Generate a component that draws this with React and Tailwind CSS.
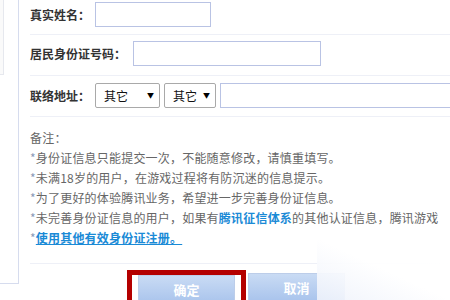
import React from "react";

// Identity info form (real name + ID number + address), with notes and buttons
const font = { fontFamily: '"Noto Sans CJK SC", "Noto Sans", sans-serif' };

function FakeSelect({ width, label }) {
  return (
    <div
      className={`${width} h-[25px] bg-white border border-[#a9a9a9] rounded-[2px] flex items-center justify-between pl-[8px] pr-[5px] text-[12px] text-[#111]`}
    >
      <span>{label}</span>
      <span className="text-[7px] text-black">▼</span>
    </div>
  );
}

export default function App() {
  return (
    <div className="relative w-[450px] h-[300px] bg-white overflow-hidden flex items-start" style={font}>
      {/* left side panel edge */}
      <div className="w-[19px] h-[284px] shrink-0 border-r border-b border-[#d6dcee] relative">
        <div className="w-[4px] h-[75px] border-r border-b border-[#e6e8ee] bg-[#fafafa]" />
      </div>

      {/* main form */}
      <div className="flex-1 ml-[11px] flex flex-col">
        {/* real name */}
        <div className="shrink-0 h-[35px] pt-[2px] border-b border-[#eef0f7] flex items-start gap-[3px]">
          <span className="h-[25px] flex items-center text-[12px] font-bold text-[#333] w-[62px]">真实姓名：</span>
          <div className="w-[116px] h-[25px] border border-[#b9c3e4] bg-white" />
        </div>

        {/* ID number */}
        <div className="shrink-0 h-[41px] pt-[6px] border-b border-[#eef0f7] flex items-start gap-[3px]">
          <span className="h-[25px] flex items-center text-[12px] font-bold text-[#333] w-[100px]">居民身份证号码：</span>
          <div className="w-[188px] h-[25px] border border-[#b9c3e4] bg-white" />
        </div>

        {/* address */}
        <div className="shrink-0 h-[41px] pt-[7px] border-b border-[#eef0f7] flex items-start">
          <span className="h-[25px] flex items-center text-[12px] font-bold text-[#333] w-[65px]">联络地址：</span>
          <FakeSelect width="w-[65px]" label="其它" />
          <div className="w-[4px]" />
          <FakeSelect width="w-[52px]" label="其它" />
          <div className="w-[4px]" />
          <div className="flex-1 h-[25px] border border-[#b9c3e4] border-r-0 bg-white" />
        </div>

        {/* notes */}
        <div className="shrink-0 pt-[11px] pb-[15px] border-b border-[#eef0f7] text-[12px] leading-[20px] tracking-[0.2px] text-[#666] whitespace-nowrap">
          <p>备注：</p>
          <p><span className="text-[#8a9ab8]">*</span>身份证信息只能提交一次，不能随意修改，请慎重填写。</p>
          <p><span className="text-[#8a9ab8]">*</span>未满18岁的用户，在游戏过程将有防沉迷的信息提示。</p>
          <p><span className="text-[#8a9ab8]">*</span>为了更好的体验腾讯业务，希望进一步完善身份证信息。</p>
          <p>
            <span className="text-[#8a9ab8]">*</span>未完善身份证信息的用户，如果有
            <span className="font-bold text-[#1a8ad6]">腾讯征信体系</span>
            的其他认证信息，腾讯游戏
          </p>
          <p>
            <span className="text-[#8a9ab8]">*</span>
            <span className="font-bold text-[#1a8ad6] underline">使用其他有效身份证注册。</span>
          </p>
        </div>

        {/* buttons */}
        <div className="shrink-0 pt-[6px] pl-[97px] flex items-start">
          <div className="border-[5px] border-b-0 border-[#b40000] px-[6px] h-[40px]">
            <div className="w-[97px] h-[30px] border border-[#bccde9] bg-gradient-to-b from-[#c9dbf4] to-[#a8c3ec] flex items-center justify-center text-[13px] font-bold text-white">
              确定
            </div>
          </div>
          <div className="ml-[2px] mt-[3px] w-[97px] h-[30px] border border-[#bccde9] bg-gradient-to-b from-[#c9dbf4] to-[#a8c3ec] flex items-center justify-center text-[13px] font-bold text-white">
            取消
          </div>
        </div>
      </div>

      {/* faded watermark corner */}
      <div className="absolute left-[317px] top-[238px] right-0 bottom-0 bg-gradient-to-tr from-[#eef2fb]/90 via-white/95 to-white" />
    </div>
  );
}
